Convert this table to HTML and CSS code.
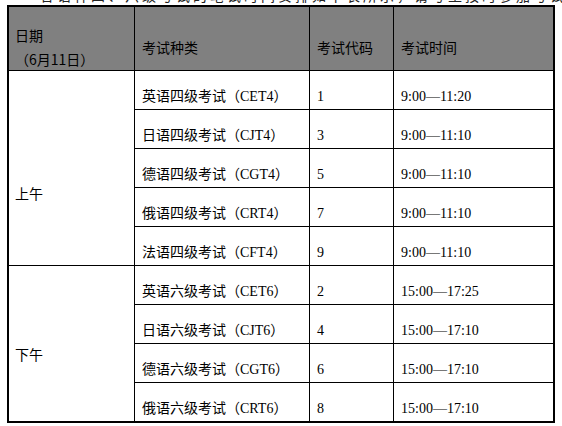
FILE: index.html
```html
<!DOCTYPE html>
<html lang="zh-CN">
<head>
<meta charset="utf-8">
<link rel="stylesheet" href="styles.css">
</head>
<body>
<p class="intro">各语种四、六级考试的笔试时间安排如下表所示，请考生按时参加考试。</p>
<div class="sheet">
  <div class="cell head date"><span>日期</span><span>（6月11日）</span></div>
  <div class="cell head">考试种类</div>
  <div class="cell head">考试代码</div>
  <div class="cell head end">考试时间</div>

  <div class="cell span am">上午</div>
  <div class="cell">英语四级考试（CET4）</div><div class="cell">1</div><div class="cell end">9:00—11:20</div>
  <div class="cell">日语四级考试（CJT4）</div><div class="cell">3</div><div class="cell end">9:00—11:10</div>
  <div class="cell">德语四级考试（CGT4）</div><div class="cell">5</div><div class="cell end">9:00—11:10</div>
  <div class="cell">俄语四级考试（CRT4）</div><div class="cell">7</div><div class="cell end">9:00—11:10</div>
  <div class="cell">法语四级考试（CFT4）</div><div class="cell">9</div><div class="cell end">9:00—11:10</div>

  <div class="cell span pm last">下午</div>
  <div class="cell">英语六级考试（CET6）</div><div class="cell">2</div><div class="cell end">15:00—17:25</div>
  <div class="cell">日语六级考试（CJT6）</div><div class="cell">4</div><div class="cell end">15:00—17:10</div>
  <div class="cell">德语六级考试（CGT6）</div><div class="cell">6</div><div class="cell end">15:00—17:10</div>
  <div class="cell last">俄语六级考试（CRT6）</div><div class="cell last">8</div><div class="cell end last">15:00—17:10</div>
</div>
</body>
</html>
```

FILE: styles.css
```css
html, body {
  margin: 0;
  padding: 0;
  background: #ffffff;
}
body {
  font-family: "Liberation Serif", "Noto Sans CJK SC", serif;
  font-size: 14px;
  color: #000;
  overflow: hidden;
  height: 426px;
}
.intro {
  margin: -13px 0 0 40px;
  height: 18px;
  line-height: 17px;
  font-family: "Noto Sans CJK SC", sans-serif;
  font-size: 14px;
  white-space: nowrap;
  letter-spacing: 3px;
  color: #222;
}
.sheet {
  margin-left: 7px;
  width: 548px;
  box-sizing: border-box;
  border: 2px solid #000;
  display: grid;
  grid-template-columns: 126px 175px 84px 159px;
  grid-template-rows: 64px repeat(8, 39px) 38px;
}
.cell {
  box-sizing: border-box;
  border-right: 1px solid #000;
  border-bottom: 1px solid #000;
  padding: 0 4px 3px 7px;
  line-height: 18px;
  display: flex;
  align-items: flex-end;
  white-space: nowrap;
}
.cell.end {
  border-right: none;
}
.cell.last {
  border-bottom: none;
}
.head {
  background: #808080;
  align-items: center;
  padding: 17px 4px 0 7px;
  font-family: "Noto Sans CJK SC", sans-serif;
}
.date {
  flex-direction: column;
  align-items: flex-start;
  justify-content: center;
  line-height: 24px;
  padding-left: 6px;
}
.span {
  grid-column: 1;
  align-items: center;
  padding: 0 4px 0 6px;
  font-family: "Noto Sans CJK SC", sans-serif;
}
.am {
  grid-row: 2 / span 5;
  padding-top: 50px;
}
.pm {
  grid-row: 7 / span 4;
  padding-top: 20px;
}
```
